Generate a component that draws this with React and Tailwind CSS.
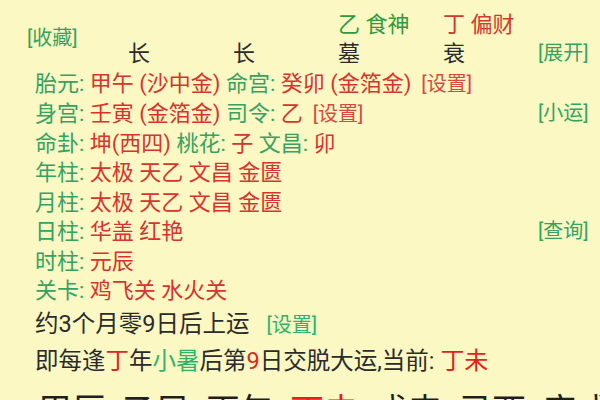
import React from 'react';

const G = 'text-[#35a262]';
const R = 'text-[#d6342c]';

const header = [
  [null, null, <span className="text-[#d6342c]">丙 比肩</span>, <span className="text-[#2c4d9c]">甲 七杀</span>],
  [null, null, <span className="text-[#2f9a3c]">乙 食神</span>, <span className="text-[#d03a2e]">丁 偏财</span>],
  ['长', '长', '墓', '衰'],
];

const rows = [
  {
    body: (
      <>
        <span className={G}>胎元: </span>
        <span className={R}>甲午 (沙中金) </span>
        <span className={G}>命宫: </span>
        <span className={R}>癸卯 (金箔金)</span>
        <span className="ml-[10px] text-[20px] text-[#d9483f]">[设置]</span>
      </>
    ),
  },
  {
    body: (
      <>
        <span className={G}>身宫: </span>
        <span className={R}>壬寅 (金箔金) </span>
        <span className={G}>司令: </span>
        <span className={R}>乙</span>
        <span className="ml-[10px] text-[20px] text-[#d9483f]">[设置]</span>
      </>
    ),
    side: '[小运]',
  },
  {
    body: (
      <>
        <span className={G}>命卦: </span>
        <span className={R}>坤(西四) </span>
        <span className={G}>桃花: </span>
        <span className={R}>子 </span>
        <span className={G}>文昌: </span>
        <span className={R}>卯</span>
      </>
    ),
  },
  { label: '年柱', value: '太极 天乙 文昌 金匮' },
  { label: '月柱', value: '太极 天乙 文昌 金匮' },
  { label: '日柱', value: '华盖 红艳', side: '[查询]' },
  { label: '时柱', value: '元辰' },
  { label: '关卡', value: '鸡飞关 水火关' },
];

const cycles = ['甲辰', '乙巳', '丙午', '丁未', '戊申', '己酉', '庚戌'];

export default function App() {
  return (
    <div className="w-[600px] h-[400px] overflow-hidden bg-[#fbf8c4] text-[#2b2b2b] font-[Roboto,'Noto_Sans_CJK_SC',sans-serif]">
      {/* pillar header, scrolled partly out of view */}
      <div className="-mt-[26px] flex">
        <div className="w-[128px] pl-[27px] flex flex-col text-[20px] leading-[29.5px] text-[#35a262]">
          <span className="h-[29.5px]">[分享]</span>
          <span className="mt-[20px]">[收藏]</span>
        </div>
        <div className="flex flex-col">
          {header.map((cells, i) => (
            <div
              key={i}
              className={`flex h-[29.5px] items-center text-[22px] leading-[29.5px] ${i === 1 ? 'mt-[6px]' : ''}`}
            >
              {cells.map((c, j) => (
                <div key={j} className={j === 3 ? 'w-[95px]' : 'w-[105px]'}>
                  {c}
                </div>
              ))}
              {i === 2 && <span className="text-[20px] text-[#35a262]">[展开]</span>}
            </div>
          ))}
        </div>
      </div>

      {/* detail rows */}
      <div className="mt-[1px]">
        {rows.map((r, i) => (
          <div key={i} className="flex h-[29.5px] items-center pl-[35px] text-[22px] leading-[29.5px]">
            <div className="flex-1 whitespace-pre">
              {r.body || (
                <>
                  <span className={G}>{r.label}: </span>
                  <span className={R}>{r.value}</span>
                </>
              )}
            </div>
            <div className="w-[62px] text-[20px] text-[#35a262]">{r.side}</div>
          </div>
        ))}
      </div>

      <div className="pl-[35px] text-[23.5px] leading-[36px] text-[#2b2b2b]">
        <div>
          约3个月零9日后上运
          <span className="ml-[17px] text-[20px] text-[#2eb36a]">[设置]</span>
        </div>
        <div className="whitespace-pre">
          即每逢<span className="text-[#e0261f]">丁</span>年<span className="text-[#2eb36a]">小暑</span>后第<span className="text-[#e0261f]">9</span>日交脱大运,当前: <span className="text-[24px] text-[#e8201a]">丁未</span>
        </div>
      </div>

      <div className="flex pl-[38px] text-[34px] leading-[64px] text-[#1f1f1f]">
        {cycles.map((c) => (
          <div key={c} className={`w-[84px] shrink-0 ${c === '丁未' ? 'text-[#e8201a]' : ''}`}>
            {c}
          </div>
        ))}
      </div>
    </div>
  );
}
